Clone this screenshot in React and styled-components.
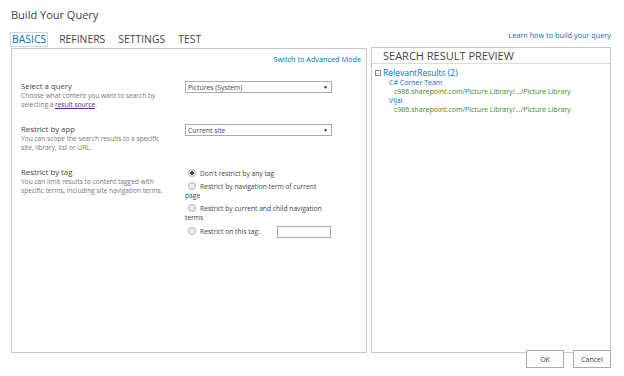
import React from "react"
import styled, { createGlobalStyle } from "styled-components"

const GlobalStyle = createGlobalStyle`
  html, body {
    margin: 0;
    padding: 0;
    background: #fff;
  }
  body {
    font-family: "Open Sans", "Liberation Sans", sans-serif;
    color: #444;
  }
`

const tagOptions = [
  { label: "Don't restrict by any tag", checked: true },
  { label: "Restrict by navigation term of current page" },
  { label: "Restrict by current and child navigation terms" },
  { label: "Restrict on this tag:", input: true },
]

const results = [
  { title: "C# Corner Team", url: "c986.sharepoint.com/Picture Library/.../Picture Library" },
  { title: "Vijai", url: "c986.sharepoint.com/Picture Library/.../Picture Library" },
]

function App() {
  const fields = [
    {
      title: "Select a query",
      text: (
        <>
          Choose what content you want to search by selecting a{" "}
          <SourceLink>result source</SourceLink>.
        </>
      ),
      value: "Pictures (System)",
    },
    {
      title: "Restrict by app",
      text: "You can scope the search results to a specific site, library, list or URL.",
      value: "Current site",
    },
  ]

  return (
    <Page>
      <GlobalStyle />
      <Title>Build Your Query</Title>
      <TabBar>
        <Tabs>
          <Tab $active>BASICS</Tab>
          <Tab>REFINERS</Tab>
          <Tab>SETTINGS</Tab>
          <Tab>TEST</Tab>
        </Tabs>
        <HelpLink>Learn how to build your query</HelpLink>
      </TabBar>
      <Panels>
        <QueryPanel>
          <ModeLink>Switch to Advanced Mode</ModeLink>
          {fields.map((f) => (
            <Field key={f.title}>
              <FieldInfo>
                <FieldTitle>{f.title}</FieldTitle>
                <FieldText>{f.text}</FieldText>
              </FieldInfo>
              <Select>
                <span>{f.value}</span>
                <Arrow>▼</Arrow>
              </Select>
            </Field>
          ))}
          <Field>
            <FieldInfo>
              <FieldTitle>Restrict by tag</FieldTitle>
              <FieldText>
                You can limit results to content tagged with specific terms,
                including site navigation terms.
              </FieldText>
            </FieldInfo>
            <Options>
              {tagOptions.map((o) => (
                <Option key={o.label}>
                  <Radio $checked={o.checked} />
                  {o.label}
                  {o.input && <TagInput />}
                </Option>
              ))}
            </Options>
          </Field>
        </QueryPanel>
        <PreviewPanel>
          <PreviewHeader>SEARCH RESULT PREVIEW</PreviewHeader>
          <PreviewBody>
            <Group>
              <Collapse>−</Collapse>
              RelevantResults (2)
            </Group>
            {results.map((r) => (
              <Result key={r.title}>
                <ResultTitle>{r.title}</ResultTitle>
                <ResultUrl>{r.url}</ResultUrl>
              </Result>
            ))}
          </PreviewBody>
        </PreviewPanel>
      </Panels>
      <Buttons>
        <Button>OK</Button>
        <Button>Cancel</Button>
      </Buttons>
    </Page>
  )
}

export default App

const Page = styled.div`
  width: 624px;
  height: 376px;
  box-sizing: border-box;
  padding: 7px 13px 0 11px;
  display: flex;
  flex-direction: column;
`

const Title = styled.div`
  font-size: 11px;
  line-height: 16px;
  color: #444;
`

const TabBar = styled.div`
  display: flex;
  justify-content: space-between;
  align-items: flex-start;
  margin-top: 10px;
`

const Tabs = styled.div`
  display: flex;
  gap: 11px;
`

const Tab = styled.div`
  font-size: 10.4px;
  line-height: 13px;
  padding: 0 1px;
  color: ${(p) => (p.$active ? "#0072c6" : "#444")};
  outline: ${(p) => (p.$active ? "1px solid #c6d9ec" : "none")};
`

const HelpLink = styled.div`
  font-size: 7.3px;
  color: #0072c6;
  margin-top: -3px;
`

const Panels = styled.div`
  display: flex;
  gap: 4px;
  margin-top: 2px;
  height: 305px;
`

const Panel = styled.div`
  border: 1px solid #c8c8c8;
  box-sizing: border-box;
  height: 100%;
`

const QueryPanel = styled(Panel)`
  width: 356px;
  padding: 5px 5px 0 9px;
  display: flex;
  flex-direction: column;
`

const ModeLink = styled.div`
  align-self: flex-end;
  font-size: 7.3px;
  color: #0072c6;
  margin-bottom: 17px;
`

const Field = styled.div`
  display: grid;
  grid-template-columns: 164px 147px;
  margin-bottom: 15px;
`

const FieldInfo = styled.div`
  display: flex;
  flex-direction: column;
`

const FieldTitle = styled.div`
  font-size: 7.8px;
  line-height: 10px;
  color: #444;
`

const FieldText = styled.div`
  font-size: 6.6px;
  line-height: 9px;
  color: #777;
  width: 150px;
`

const SourceLink = styled.span`
  color: #5c2d91;
  text-decoration: underline;
`

const Select = styled.div`
  height: 12px;
  box-sizing: border-box;
  border: 1px solid #ababab;
  display: flex;
  justify-content: space-between;
  align-items: center;
  padding: 0 3px 0 2px;
  font-size: 6.8px;
  color: #444;
`

const Arrow = styled.span`
  font-size: 5px;
  color: #222;
`

const Options = styled.div`
  display: flex;
  flex-direction: column;
  gap: 3px;
  margin-top: 2px;
`

const Option = styled.div`
  font-size: 6.7px;
  line-height: 9.5px;
  color: #444;
`

const Radio = styled.span`
  display: inline-block;
  width: 6px;
  height: 6px;
  border-radius: 50%;
  border: 1px solid #b5b5b5;
  background: ${(p) =>
    p.$checked
      ? "radial-gradient(circle, #444 0 1.6px, #eee 2px)"
      : "#ececec"};
  margin: 0 4px 0 3px;
  vertical-align: -1px;
`

const TagInput = styled.span`
  display: inline-block;
  width: 54px;
  height: 12px;
  box-sizing: border-box;
  border: 1px solid #ababab;
  margin-left: 17px;
  vertical-align: -4px;
`

const PreviewPanel = styled(Panel)`
  flex: 1;
  margin-top: -1px;
  height: calc(100% + 1px);
`

const PreviewHeader = styled.div`
  font-size: 11px;
  line-height: 14px;
  padding: 1px 0 0 11px;
  border-bottom: 1px solid #ddd;
  color: #444;
`

const PreviewBody = styled.div`
  padding: 3px 0 0 3px;
`

const Group = styled.div`
  display: flex;
  align-items: center;
  font-size: 8.5px;
  line-height: 11px;
  color: #0072c6;
`

const Collapse = styled.span`
  width: 4px;
  height: 4px;
  border: 1px solid #888;
  font-size: 5px;
  line-height: 4px;
  text-align: center;
  color: #444;
  margin-right: 2px;
`

const Result = styled.div`
  padding-left: 14px;
  font-size: 7px;
  line-height: 9px;
`

const ResultTitle = styled.div`
  color: #0072c6;
`

const ResultUrl = styled.div`
  color: #3a8a1e;
  padding-left: 5px;
`

const Buttons = styled.div`
  display: flex;
  justify-content: flex-end;
  gap: 9px;
  margin-top: -3px;
`

const Button = styled.div`
  width: 38px;
  height: 18px;
  box-sizing: border-box;
  border: 1px solid #ababab;
  background: #fdfdfd;
  display: flex;
  align-items: center;
  justify-content: center;
  font-size: 7px;
  color: #444;
`
